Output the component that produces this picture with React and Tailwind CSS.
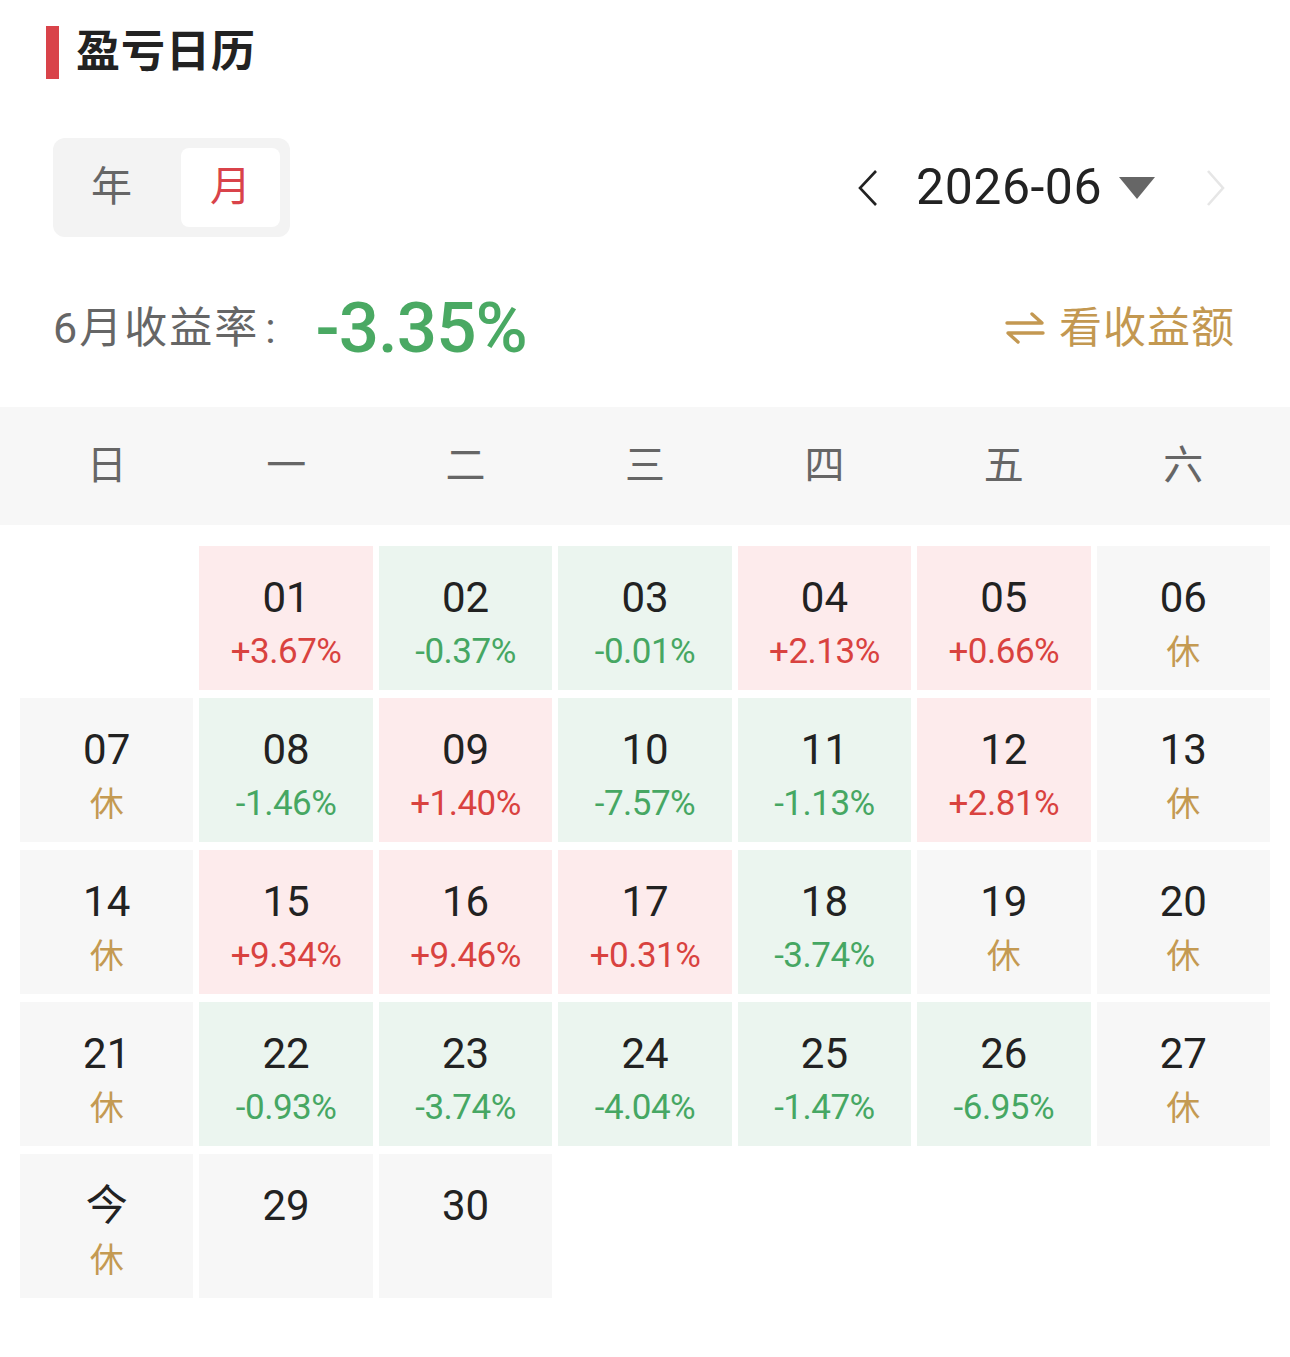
const FONT = { fontFamily: '"Roboto", "Noto Sans CJK SC", sans-serif' };

// t: r = red (up), g = green (down), x = rest day
const cells = [
  null,
  { d: "01", t: "r", v: "+3.67%" },
  { d: "02", t: "g", v: "-0.37%" },
  { d: "03", t: "g", v: "-0.01%" },
  { d: "04", t: "r", v: "+2.13%" },
  { d: "05", t: "r", v: "+0.66%" },
  { d: "06", t: "x" },
  { d: "07", t: "x" },
  { d: "08", t: "g", v: "-1.46%" },
  { d: "09", t: "r", v: "+1.40%" },
  { d: "10", t: "g", v: "-7.57%" },
  { d: "11", t: "g", v: "-1.13%" },
  { d: "12", t: "r", v: "+2.81%" },
  { d: "13", t: "x" },
  { d: "14", t: "x" },
  { d: "15", t: "r", v: "+9.34%" },
  { d: "16", t: "r", v: "+9.46%" },
  { d: "17", t: "r", v: "+0.31%" },
  { d: "18", t: "g", v: "-3.74%" },
  { d: "19", t: "x" },
  { d: "20", t: "x" },
  { d: "21", t: "x" },
  { d: "22", t: "g", v: "-0.93%" },
  { d: "23", t: "g", v: "-3.74%" },
  { d: "24", t: "g", v: "-4.04%" },
  { d: "25", t: "g", v: "-1.47%" },
  { d: "26", t: "g", v: "-6.95%" },
  { d: "27", t: "x" },
  { d: "今", t: "x" },
  { d: "29", t: "n" },
  { d: "30", t: "n" },
];

const weekDays = ["日", "一", "二", "三", "四", "五", "六"];

const Cell = ({ c }) => {
  if (!c) return <div />;
  const bg =
    c.t === "r" ? "bg-[#fdebec]" : c.t === "g" ? "bg-[#ebf5ef]" : "bg-[#f7f7f7]";
  return (
    <div className={`h-[144px] ${bg} flex flex-col items-center pt-[27px]`}>
      <div className="text-[42px] leading-[50px] text-[#222]">{c.d}</div>
      {c.t === "r" && (
        <div className="text-[35px] leading-[40px] mt-[9px] text-[#d9423f] tracking-[-0.5px]">{c.v}</div>
      )}
      {c.t === "g" && (
        <div className="text-[35px] leading-[40px] mt-[9px] text-[#46a763] tracking-[-0.5px]">{c.v}</div>
      )}
      {c.t === "x" && (
        <div className="text-[34px] leading-[40px] mt-[9px] text-[#c49a52]">休</div>
      )}
    </div>
  );
};

export default function App() {
  return (
    <div className="w-[1290px] min-h-[1357px] bg-white pt-[26px]" style={FONT}>
      {/* 标题 */}
      <div className="flex items-center pl-[46px]">
        <div className="w-[13px] h-[53px] bg-[#d9434a]" />
        <div className="ml-[17px] text-[44px] leading-[53px] font-bold text-[#222] tracking-[1px]">盈亏日历</div>
      </div>

      {/* 年/月 切换 + 月份导航 */}
      <div className="flex items-center justify-between mt-[59px] pl-[53px] pr-[64px]">
        <div className="w-[237px] h-[99px] rounded-[12px] bg-[#f3f3f3] flex items-center">
          <div className="w-[128px] pl-[38px] text-[41px] text-[#666]">年</div>
          <div className="w-[99px] h-[79px] rounded-[8px] bg-white flex items-center justify-center text-[41px] text-[#d9434a]">
            月
          </div>
        </div>
        <div className="flex items-center">
          <svg width="22" height="38" viewBox="0 0 22 38" fill="none">
            <path d="M19 2 L3 19 L19 36" stroke="#222" strokeWidth="2.6" />
          </svg>
          <div className="ml-[37px] text-[50px] text-[#222] tracking-[0.5px]">2026-06</div>
          <svg className="ml-[16px]" width="38" height="24" viewBox="0 0 38 24">
            <path d="M1 1 H37 L19 23 Z" fill="#666" />
          </svg>
          <svg className="ml-[50px]" width="20" height="38" viewBox="0 0 20 38" fill="none">
            <path d="M2 2 L17 19 L2 36" stroke="#e6e6e6" strokeWidth="2.6" />
          </svg>
        </div>
      </div>

      {/* 收益率 */}
      <div className="flex items-center justify-between mt-[42px] pl-[53px] pr-[55px] h-[98px]">
        <div className="flex items-center">
          <span className="text-[43px] text-[#666] tracking-[2px]">6月收益率</span>
          <span className="ml-[6px] text-[43px] text-[#666]">:</span>
          <span className="ml-[40px] text-[71px] font-medium text-[#4aa963] tracking-[-1px]">-3.35%</span>
        </div>
        <div className="flex items-center text-[#c39851]">
          <svg width="40" height="36" viewBox="0 0 40 36" fill="none">
            <path d="M2 13 H37 L27 4" stroke="#c39851" strokeWidth="3.4" strokeLinecap="round" strokeLinejoin="round" />
            <path d="M38 23 H3 L13 32" stroke="#c39851" strokeWidth="3.4" strokeLinecap="round" strokeLinejoin="round" />
          </svg>
          <span className="ml-[14px] text-[43px] tracking-[1px]">看收益额</span>
        </div>
      </div>

      {/* 星期表头 */}
      <div className="mt-[30px] h-[118px] bg-[#f7f7f7] px-[20px] grid grid-cols-7 gap-x-[6px] items-center">
        {weekDays.map((w) => (
          <div key={w} className="text-center text-[40px] text-[#666]">
            {w}
          </div>
        ))}
      </div>

      {/* 日历格子 */}
      <div className="mt-[21px] px-[20px] grid grid-cols-7 gap-x-[6px] gap-y-[8px]">
        {cells.map((c, i) => (
          <Cell key={i} c={c} />
        ))}
      </div>
    </div>
  );
}
